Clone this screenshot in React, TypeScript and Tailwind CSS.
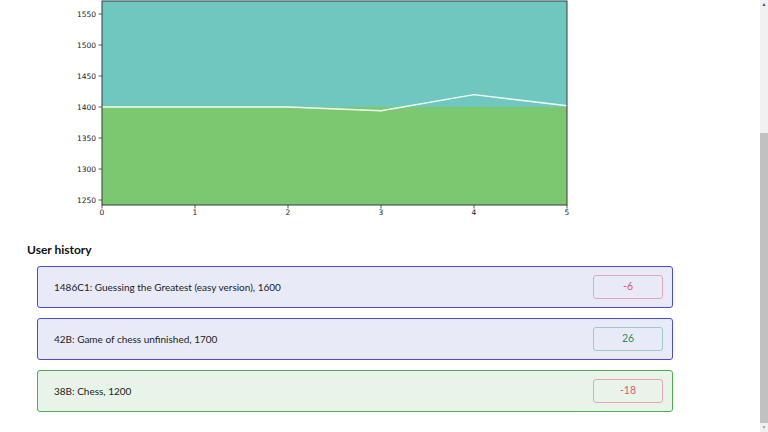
import React from "react";

type Entry = { label: string; delta: number; solved: boolean };

const history: Entry[] = [
  { label: "1486C1: Guessing the Greatest (easy version), 1600", delta: -6, solved: false },
  { label: "42B: Game of chess unfinished, 1700", delta: 26, solved: false },
  { label: "38B: Chess, 1200", delta: -18, solved: true },
];

// rating -> pixel y inside the chart svg
const yOf = (v: number) => 107 - (v - 1400) * 0.62;
const xOf = (i: number) => 102 + i * 93;
const ratings = [1400, 1400, 1400, 1394, 1420, 1402];

function RatingChart() {
  const yTicks = [1550, 1500, 1450, 1400, 1350, 1300, 1250];
  const pts = ratings.map((r, i) => `${xOf(i)},${yOf(r)}`).join(" ");
  return (
    <svg width="600" height="218" className="block" style={{ fontFamily: "'DejaVu Sans', sans-serif" }}>
      {/* bands */}
      <rect x="102" y="1" width="465" height="106" fill="#6fc7c0" />
      <rect x="102" y="107" width="465" height="98" fill="#7bc870" />
      <polyline points={pts} fill="none" stroke="#f4fff4" strokeWidth="1.4" />
      <rect x="102" y="1" width="465" height="204" fill="none" stroke="#3a3a3a" strokeWidth="1" />
      {yTicks.map((t) => (
        <g key={t}>
          <line x1="98.5" x2="102" y1={yOf(t)} y2={yOf(t)} stroke="#333" strokeWidth="0.8" />
          <text x="96" y={yOf(t) + 2.6} fontSize="7.5" textAnchor="end" fill="#222">
            {t}
          </text>
        </g>
      ))}
      {[0, 1, 2, 3, 4, 5].map((i) => (
        <g key={i}>
          <line x1={xOf(i)} x2={xOf(i)} y1="205" y2="208.5" stroke="#333" strokeWidth="0.8" />
          <text x={xOf(i)} y="215" fontSize="7.5" textAnchor="middle" fill="#222">
            {i}
          </text>
        </g>
      ))}
    </svg>
  );
}

function HistoryRow({ label, delta, solved }: Entry) {
  return (
    <li
      className={
        solved
          ? "flex items-center justify-between h-[42px] pl-[16px] pr-[9px] rounded-[3px] border border-[#4caf50] bg-[#e8f4e9]"
          : "flex items-center justify-between h-[42px] pl-[16px] pr-[9px] rounded-[3px] border border-[#4a4ad8] bg-[#e8eaf8]"
      }
    >
      <p className="text-[10px] text-[#222]">{label}</p>
      <span
        className={
          delta < 0
            ? "w-[70px] h-[24px] flex items-center justify-center rounded-[3px] border border-[#eaa6b0] text-[10.5px] text-[#e0566a]"
            : "w-[70px] h-[24px] flex items-center justify-center rounded-[3px] border border-[#9ccdc0] text-[10.5px] text-[#2e8a5e]"
        }
      >
        {delta}
      </span>
    </li>
  );
}

export default function App() {
  return (
    <div className="flex w-[768px] h-[432px] overflow-hidden bg-white" style={{ fontFamily: "Lato, 'Noto Sans', sans-serif" }}>
      <main className="flex-1">
        <RatingChart />
        <h2 className="mt-[24px] ml-[27px] text-[12px] font-bold text-[#111] leading-[16px]">User history</h2>
        <ul className="mt-[8px] ml-[37px] w-[636px] flex flex-col gap-[10px]">
          {history.map((h) => (
            <HistoryRow key={h.label} {...h} />
          ))}
        </ul>
      </main>

      {/* scrollbar */}
      <div className="w-[8px] h-full flex flex-col bg-[#f1f1f1]">
        <div className="h-[8px] flex items-center justify-center text-[5px] text-[#505050] leading-none">▲</div>
        <div className="h-[125px]" />
        <div className="h-[290px] bg-[#c1c1c1]" />
        <div className="flex-1 flex items-center justify-center text-[5px] text-[#a0a0a0] leading-none">▼</div>
      </div>
    </div>
  );
}
